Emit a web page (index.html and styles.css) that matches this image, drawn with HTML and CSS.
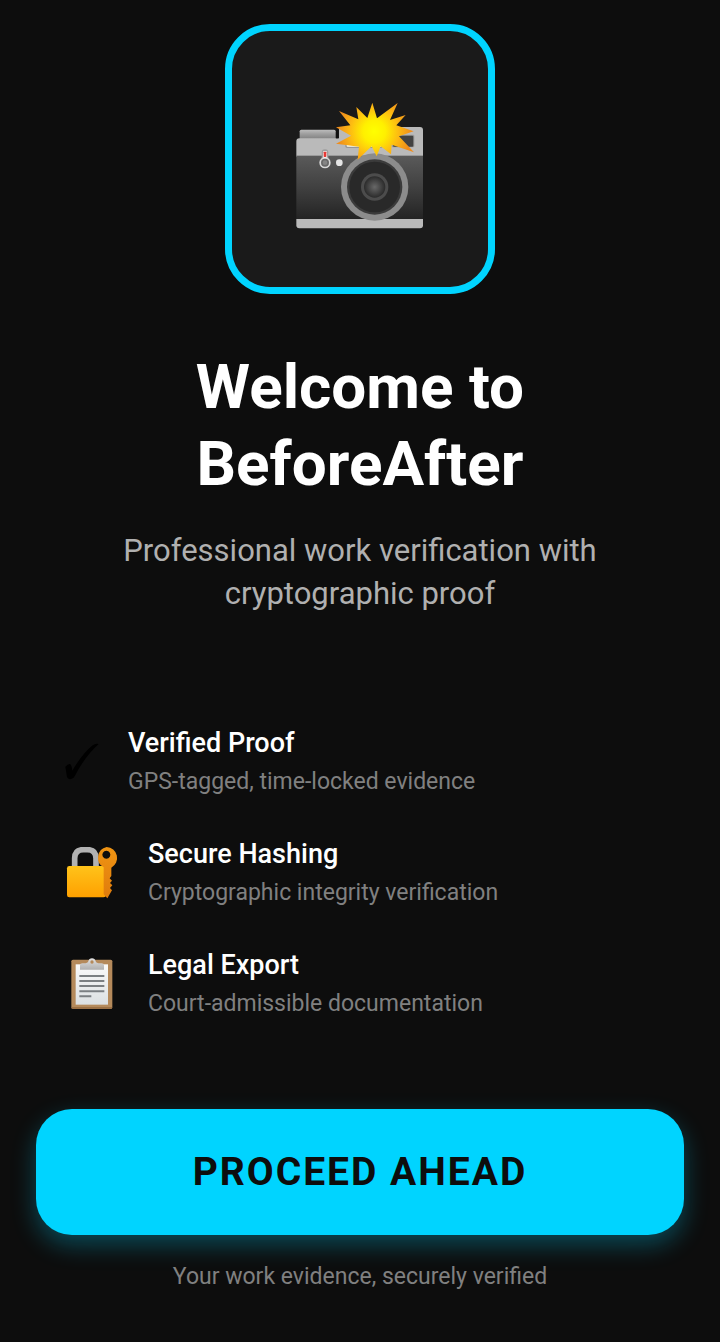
FILE: index.html
```html
<!DOCTYPE html>
<html lang="en">
<head>
    <meta charset="UTF-8">
    <meta name="viewport" content="width=device-width, initial-scale=1.0">
    <title>BeforeAfter</title>
    <link rel="stylesheet" href="styles.css">
</head>
<body>
    <main class="welcome">
        <div class="logo">
            <svg class="logo-icon" viewBox="33 36 384 384" aria-hidden="true">
                <defs>
                    <linearGradient id="bodyGrad" x1="0" y1="0" x2="0" y2="1">
                        <stop offset="0" stop-color="#5a5a5a"/>
                        <stop offset="0.5" stop-color="#404040"/>
                        <stop offset="1" stop-color="#232323"/>
                    </linearGradient>
                    <linearGradient id="knobGrad" x1="0" y1="0" x2="0" y2="1">
                        <stop offset="0" stop-color="#bdbdbd"/>
                        <stop offset="0.35" stop-color="#a0a0a0"/>
                        <stop offset="1" stop-color="#757575"/>
                    </linearGradient>
                    <radialGradient id="lensGrad">
                        <stop offset="0" stop-color="#686868"/>
                        <stop offset="1" stop-color="#2b2b2b"/>
                    </radialGradient>
                    <radialGradient id="flashGrad" gradientUnits="userSpaceOnUse" cx="268" cy="124" r="112">
                        <stop offset="0" stop-color="#ffff00"/>
                        <stop offset="0.3" stop-color="#fff000"/>
                        <stop offset="0.65" stop-color="#fdbb12"/>
                        <stop offset="1" stop-color="#ef8c1c"/>
                    </radialGradient>
                </defs>
                <!-- body -->
                <rect x="44" y="119" width="108" height="34" rx="5" fill="url(#knobGrad)"/>
                <path d="M34 154q0-9 9-9h119v-26q0-8 8-8h235q9 0 9 9v80H34z" fill="#bababa"/>
                <path d="M153 119h7v26h-7z" fill="#111"/>
                <rect x="34" y="197" width="380" height="192" fill="url(#bodyGrad)"/>
                <path d="M34 387h380v19q0 9-9 9H43q-9 0-9-9z" fill="#bababa"/>
                <rect x="320" y="134" width="68" height="38" rx="4" fill="#9a9a9a"/>
                <rect x="324" y="137" width="61" height="33" rx="3" fill="#424242"/>
                <rect x="181" y="152" width="112" height="22" rx="5" fill="#979797"/>
                <rect x="185" y="152" width="105" height="18" rx="3" fill="#fffde7"/>
                <!-- lever and dot -->
                <rect x="110" y="178" width="20" height="34" rx="9" fill="#9e9e9e"/>
                <circle cx="120" cy="218" r="17" fill="#d8d8d8"/>
                <circle cx="120" cy="218" r="12" fill="#686868"/>
                <circle cx="120" cy="218" r="7" fill="#858585"/>
                <rect x="114" y="183" width="12" height="21" rx="4" fill="#eee"/>
                <rect x="116" y="185" width="8" height="16" rx="2" fill="#e53935"/>
                <circle cx="163" cy="218" r="10" fill="#e5e5e5"/>
                <!-- lens -->
                <circle cx="269" cy="291" r="101" fill="#8c8c8c"/>
                <circle cx="269" cy="291" r="83" fill="#3b3b3b"/>
                <circle cx="269" cy="291" r="76" fill="#292929"/>
                <circle cx="269" cy="291" r="41" fill="#4c4c4c"/>
                <circle cx="269" cy="291" r="32" fill="url(#lensGrad)"/>
                <!-- flash -->
                <path d="M262 38L276 85L338 39L315 90L362 75L334 106L386 124L342 139L387 187L320 164L318 193L287 169L275 199L260 169L218 209L222 170L153 161L198 137L153 112L196 106L162 63L220 88L214 51L247 84z" fill="url(#flashGrad)"/>
            </svg>
        </div>

        <h1 class="title">Welcome to<br>BeforeAfter</h1>
        <p class="subtitle">Professional work verification with<br>cryptographic proof</p>

        <ul class="features">
            <li class="feature">
                <svg class="check-icon" viewBox="30 63 132 126" aria-hidden="true">
                    <path d="M46 137q8-9 14-8 5 3 7 20 29-50 61-76 9-7 18-4-42 38-71 95-4 9-12 10-9 2-12-6-3-18-5-31z" fill="#000"/>
                </svg>
                <div class="feature-text">
                    <h2 class="feature-title">Verified Proof</h2>
                    <p class="feature-desc">GPS-tagged, time-locked evidence</p>
                </div>
            </li>
            <li class="feature">
                <svg class="feature-icon" viewBox="15 34 192 159" aria-hidden="true">
                    <defs>
                        <linearGradient id="lockGrad" x1="0" y1="0" x2="0" y2="1">
                            <stop offset="0" stop-color="#ffc31a"/>
                            <stop offset="1" stop-color="#ffa000"/>
                        </linearGradient>
                        <linearGradient id="keyGrad" x1="0" y1="0" x2="0" y2="1">
                            <stop offset="0" stop-color="#ef9413"/>
                            <stop offset="1" stop-color="#e07c0c"/>
                        </linearGradient>
                    </defs>
                    <path d="M59 96V68q0-26 26-26h12q26 0 26 26v28" fill="none" stroke="#b2b2b2" stroke-width="17"/>
                    <rect x="36" y="91" width="117" height="94" rx="7" fill="url(#lockGrad)"/>
                    <path fill="url(#keyGrad)" fill-rule="evenodd" d="M155 34a33 33 0 0 1 14 62v25l-5 7 7 7-6 7 7 7-7 8 6 7-14 24-11-12V95a33 33 0 0 1 9-61zM154 45a12 12 0 1 0 .1 0z"/>
                </svg>
                <div class="feature-text">
                    <h2 class="feature-title">Secure Hashing</h2>
                    <p class="feature-desc">Cryptographic integrity verification</p>
                </div>
            </li>
            <li class="feature">
                <svg class="feature-icon" viewBox="15 34 192 159" aria-hidden="true">
                    <defs>
                        <linearGradient id="paperGrad" x1="0" y1="0" x2="0" y2="1">
                            <stop offset="0" stop-color="#fafafa"/>
                            <stop offset="1" stop-color="#dce0e2"/>
                        </linearGradient>
                        <linearGradient id="clipGrad" x1="0" y1="0" x2="0" y2="1">
                            <stop offset="0" stop-color="#e2e2e2"/>
                            <stop offset="1" stop-color="#b0b0b0"/>
                        </linearGradient>
                    </defs>
                    <rect x="49" y="39" width="123" height="148" rx="5" fill="#b58a5b"/>
                    <path d="M50 184h121" stroke="#95683e" stroke-width="4"/>
                    <rect x="62" y="53" width="97" height="121" fill="url(#paperGrad)"/>
                    <path d="M75 69V56q0-6 7-6h10q7-1 8-6 2-9 11-9t11 9q1 5 8 6h10q7 0 7 6v13z" fill="url(#clipGrad)"/>
                    <circle cx="111" cy="46" r="5" fill="#b58a5b"/>
                    <path d="M73 88h75M73 103h75M73 118h75M73 134h75M73 149h36" stroke="#7b7f82" stroke-width="6"/>
                </svg>
                <div class="feature-text">
                    <h2 class="feature-title">Legal Export</h2>
                    <p class="feature-desc">Court-admissible documentation</p>
                </div>
            </li>
        </ul>

        <button type="button" class="proceed-button">PROCEED AHEAD</button>
        <p class="footer-note">Your work evidence, securely verified</p>
    </main>
</body>
</html>
```
FILE: styles.css
```css
* {
    box-sizing: border-box;
    margin: 0;
    padding: 0;
}
body {
    background-color: #0d0d0d;
    color: #fff;
    font-family: Roboto, "Liberation Sans", sans-serif;
}
.welcome {
    display: flex;
    flex-direction: column;
    align-items: center;
    padding: 24px 36px 50px;
}
.logo {
    display: flex;
    justify-content: center;
    align-items: center;
    width: 270px;
    height: 270px;
    padding-top: 13px;
    background-color: #1a1a1a;
    border: 7px solid #00d4ff;
    border-radius: 45px;
}
.logo-icon {
    width: 128px;
    height: 128px;
}
.title {
    margin-top: 54px;
    font-size: 62px;
    font-weight: 700;
    line-height: 77px;
    text-align: center;
}
.subtitle {
    margin-top: 27px;
    color: #b0b0b0;
    font-size: 31px;
    line-height: 43px;
    text-align: center;
}
.features {
    display: flex;
    flex-direction: column;
    align-self: stretch;
    gap: 40px;
    margin-top: 112px;
    padding: 0 24px;
    list-style: none;
}
.feature {
    display: flex;
    align-items: center;
    gap: 24px;
}
.check-icon {
    width: 44px;
    height: 42px;
}
.feature-icon {
    width: 64px;
    height: 53px;
}
.feature-title {
    font-size: 27px;
    font-weight: 500;
    line-height: 32px;
}
.feature-desc {
    margin-top: 7px;
    color: #808080;
    font-size: 23px;
    line-height: 32px;
}
.proceed-button {
    align-self: stretch;
    height: 126px;
    margin-top: 89px;
    background-color: #00d4ff;
    border: none;
    border-radius: 36px;
    box-shadow: 0 10px 24px rgba(0, 212, 255, 0.3);
    color: #0d0d0d;
    font-family: inherit;
    font-size: 39px;
    font-weight: 700;
    letter-spacing: 2px;
    cursor: pointer;
}
.footer-note {
    margin-top: 26px;
    color: #808080;
    font-size: 23px;
    line-height: 32px;
    text-align: center;
}
```
